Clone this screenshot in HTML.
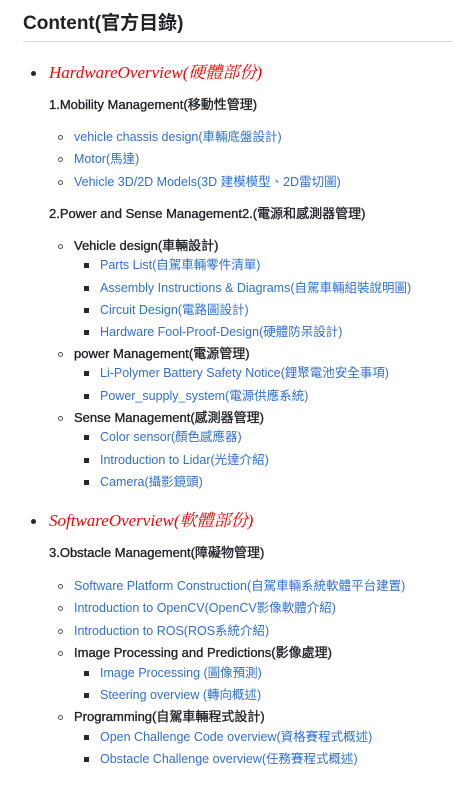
<!DOCTYPE html>
<html><head><meta charset="utf-8"><style>
body{margin:0;width:453px;height:785px;background:#fff;position:relative;overflow:hidden;font-family:"Liberation Sans","Noto Sans CJK TC",sans-serif;font-size:12.5px;color:#24292f}
.l{position:absolute;line-height:20px;height:20px;white-space:nowrap}
a{color:#2f6fd8;text-decoration:none}
.b{color:#1f2328;font-size:13px;font-weight:400;-webkit-text-stroke:0.35px #1f2328}
.h{position:absolute;white-space:nowrap;color:#ff0000;font-family:"Liberation Serif","Noto Serif CJK SC",serif;font-style:italic;font-size:17px;line-height:24px}
.disc{position:absolute;width:5px;height:5px;border-radius:50%;background:#24292f}
.circ{position:absolute;width:5px;height:5px;border-radius:50%;border:1.3px solid #555;box-sizing:border-box}
.sq{position:absolute;width:5px;height:5px;background:#24292f}
</style></head><body>
<div class="l" style="left:23px;top:12px;font-size:19px;line-height:24px;height:24px;font-weight:700;color:#1f2328">Content(官方目錄)</div>
<div style="position:absolute;left:23px;top:41px;width:430px;height:1px;background:#d8dee4"></div>

<div class="disc" style="left:31px;top:71px"></div>
<div class="h" style="left:49px;top:61px">HardwareOverview(硬體部份)</div>
<div class="l b" style="left:49px;top:95px">1.Mobility Management(移動性管理)</div>
<div class="circ" style="left:58px;top:135px"></div><div class="l" style="left:74px;top:127px"><a>vehicle chassis design(車輛底盤設計)</a></div>
<div class="circ" style="left:58px;top:157px"></div><div class="l" style="left:74px;top:149px"><a>Motor(馬達)</a></div>
<div class="circ" style="left:58px;top:180px"></div><div class="l" style="left:74px;top:172px"><a>Vehicle 3D/2D Models(3D 建模模型、2D雷切圖)</a></div>

<div class="l b" style="left:49px;top:204px">2.Power and Sense Management2.(電源和感測器管理)</div>
<div class="circ" style="left:58px;top:244px"></div><div class="l b" style="left:74px;top:236px">Vehicle design(車輛設計)</div>
<div class="sq" style="left:84px;top:263px"></div><div class="l" style="left:100px;top:255px"><a>Parts List(自駕車輛零件清單)</a></div>
<div class="sq" style="left:84px;top:286px"></div><div class="l" style="left:100px;top:278px"><a>Assembly Instructions &amp; Diagrams(自駕車輛組裝說明圖)</a></div>
<div class="sq" style="left:84px;top:308px"></div><div class="l" style="left:100px;top:300px"><a>Circuit Design(電路圖設計)</a></div>
<div class="sq" style="left:84px;top:330px"></div><div class="l" style="left:100px;top:322px"><a>Hardware Fool-Proof-Design(硬體防呆設計)</a></div>
<div class="circ" style="left:58px;top:352px"></div><div class="l b" style="left:74px;top:344px">power Management(電源管理)</div>
<div class="sq" style="left:84px;top:371px"></div><div class="l" style="left:100px;top:363px"><a>Li-Polymer Battery Safety Notice(鋰聚電池安全事項)</a></div>
<div class="sq" style="left:84px;top:394px"></div><div class="l" style="left:100px;top:386px"><a>Power_supply_system(電源供應系統)</a></div>
<div class="circ" style="left:58px;top:416px"></div><div class="l b" style="left:74px;top:408px">Sense Management(感測器管理)</div>
<div class="sq" style="left:84px;top:435px"></div><div class="l" style="left:100px;top:427px"><a>Color sensor(顏色感應器)</a></div>
<div class="sq" style="left:84px;top:458px"></div><div class="l" style="left:100px;top:450px"><a>Introduction to Lidar(光達介紹)</a></div>
<div class="sq" style="left:84px;top:480px"></div><div class="l" style="left:100px;top:472px"><a>Camera(攝影鏡頭)</a></div>

<div class="disc" style="left:31px;top:519px"></div>
<div class="h" style="left:49px;top:509px">SoftwareOverview(軟體部份)</div>
<div class="l b" style="left:49px;top:543px">3.Obstacle Management(障礙物管理)</div>
<div class="circ" style="left:58px;top:584px"></div><div class="l" style="left:74px;top:576px"><a>Software Platform Construction(自駕車輛系統軟體平台建置)</a></div>
<div class="circ" style="left:58px;top:606px"></div><div class="l" style="left:74px;top:598px"><a>Introduction to OpenCV(OpenCV影像軟體介紹)</a></div>
<div class="circ" style="left:58px;top:629px"></div><div class="l" style="left:74px;top:621px"><a>Introduction to ROS(ROS系統介紹)</a></div>
<div class="circ" style="left:58px;top:651px"></div><div class="l b" style="left:74px;top:643px">Image Processing and Predictions(影像處理)</div>
<div class="sq" style="left:84px;top:671px"></div><div class="l" style="left:100px;top:663px"><a>Image Processing (圖像預測)</a></div>
<div class="sq" style="left:84px;top:693px"></div><div class="l" style="left:100px;top:685px"><a>Steering overview (轉向概述)</a></div>
<div class="circ" style="left:58px;top:715px"></div><div class="l b" style="left:74px;top:707px">Programming(自駕車輛程式設計)</div>
<div class="sq" style="left:84px;top:735px"></div><div class="l" style="left:100px;top:727px"><a>Open Challenge Code overview(資格賽程式概述)</a></div>
<div class="sq" style="left:84px;top:757px"></div><div class="l" style="left:100px;top:749px"><a>Obstacle Challenge overview(任務賽程式概述)</a></div>
</body></html>
